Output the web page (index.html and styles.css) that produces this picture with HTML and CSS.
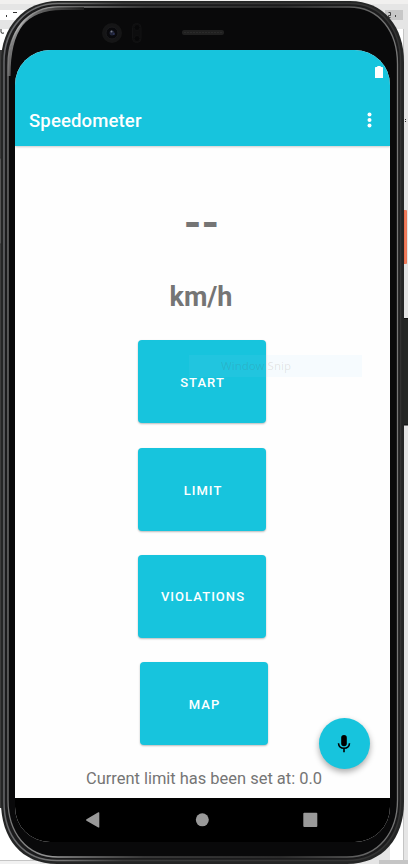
FILE: index.html
```html
<!DOCTYPE html>
<html lang="en">
<head>
<meta charset="utf-8">
<title>Speedometer</title>
<link rel="stylesheet" href="styles.css">
</head>
<body>
<div class="stage">
  <svg class="frame" width="408" height="864" viewBox="0 0 408 864" aria-hidden="true">
    <defs>
      <linearGradient id="edge" x1="0" y1="0" x2="1" y2="0">
        <stop offset="0" stop-color="#66676a"/><stop offset=".15" stop-color="#757575"/><stop offset=".3" stop-color="#3a3a3a"/><stop offset="1" stop-color="#333"/>
      </linearGradient>
      <linearGradient id="shine" x1="0" y1="0" x2="1" y2="0">
        <stop offset="0" stop-color="#777"/><stop offset=".12" stop-color="#999"/><stop offset=".35" stop-color="#444"/><stop offset=".7" stop-color="#333"/><stop offset="1" stop-color="#777"/>
      </linearGradient>
      <linearGradient id="gloss" x1="0" y1="1" x2="1" y2="0">
        <stop offset="0" stop-color="#777"/><stop offset=".45" stop-color="#c4c4c4"/><stop offset="1" stop-color="#222"/>
      </linearGradient>
      <linearGradient id="orange"><stop offset="0" stop-color="#d95b40"/><stop offset=".6" stop-color="#f5805f"/><stop offset="1" stop-color="#e3765a"/></linearGradient>
    </defs>
    <rect width="408" height="864" fill="#e5e5e5"/>
    <rect width="408" height="4" fill="#f1f0ef"/>
    <path d="M0 10h30v10H0zM0 29h12v21H0z" fill="#fff"/>
    <path d="M6 15h1v2H6zM13 12h4v1h-4z" fill="#333"/>
    <path d="M1 29v3q0 2 3 1" fill="none" stroke="#333"/>
    <rect x="385" y="10" width="18" height="10" fill="#c7c7c7"/>
    <path d="M388.500 12.500h2v3h-2v2h2M395.500 15v2" fill="none" stroke="#444"/>
    <path d="M390 29h13v25h-13zM390 815h13v45h-13z" fill="#fff"/>
    <path d="M403.500 29v831" stroke="#c5c5c5"/>
    <path d="M405 119h1v1h-1zM405 121h1v1h-1z" fill="#333"/>
    <rect x="379" y="860" width="29" height="4" fill="#c5c5c5"/>
    <path d="M0 808h30v52H0z" fill="#fff"/>
    <path d="M0 860h40v4H0z" fill="#f1f1f1"/><path d="M0 860.500h40" stroke="#c5c5c5"/>
    <path d="M0 50h3v758H0z" fill="#3c3c3c"/>
    <rect x="-2" y="158" width="4" height="86" rx="1" fill="#555" stroke="#333"/>
    <rect x="403" y="210" width="4" height="54" rx="1" fill="url(#orange)"/>
    <rect x="403" y="318.500" width="6" height="106.500" rx="1" fill="#252726" stroke="#111"/>
    <path d="M58 1H350C384 1 404 27 404 62V802C404 838 383 864 347 864H57C21 864 1 838 1 802V62C1 27 24 1 58 1Z" fill="#242525"/>
    <path d="M58 3.500H350C382 3.500 400.500 29 400.500 62V802C400.500 836 381 860.500 347 860.500H57C23 860.500 4 836 4 802V62C4 29 26 3.500 58 3.500Z" fill="#1b1b1c" stroke="url(#edge)" stroke-width="1.500"/>
    <path d="M58 7H349C380 7 397.500 32 397.500 64V800C397.500 832 379 857 347 857H58C26 857 8 832 8 800V64C8 32 28 7 58 7Z" fill="#09090a" stroke="url(#shine)" stroke-width="1.300"/>
    <path d="M9 76C9 28 25 9 62 8.500H84" fill="none" stroke="url(#gloss)" stroke-width="3" opacity=".75"/>
    <circle cx="112" cy="33" r="10" fill="#151516"/>
    <circle cx="112" cy="33" r="6" fill="#09090c" stroke="#1b1b1e"/>
    <circle cx="112" cy="33" r="2.500" fill="#202438"/><circle cx="111.500" cy="31.500" r="1" fill="#777b88"/><circle cx="114" cy="34" r=".7" fill="#424b83"/>
    <rect x="132.500" y="23.500" width="8.500" height="19" rx="4" fill="#0d0d0e" stroke="#121213"/>
    <circle cx="137" cy="27.500" r="3" fill="#070708" stroke="#111112"/><circle cx="137" cy="38.500" r="3" fill="#070708" stroke="#111112"/>
    <rect x="182" y="30" width="42" height="5" rx="2" fill="#202020"/><path d="M184 32.500h38" stroke="#2a2a2a" stroke-dasharray="2 1"/>
  </svg>

  <main class="screen">
    <header class="top">
      <div class="status">
        <svg width="8" height="12" viewBox="0 0 8 12"><path d="M2.300 0h3.400v1h1.500q.8 0 .8.800V12H0V1.800Q0 1 .8 1h1.500z" fill="#fff"/></svg>
      </div>
      <div class="bar">
        <h1 class="title">Speedometer</h1>
        <svg width="5" height="16" viewBox="0 0 5 16" fill="#fff"><circle cx="2.500" cy="2.400" r="2"/><circle cx="2.500" cy="8" r="2"/><circle cx="2.500" cy="13.500" r="2"/></svg>
      </div>
    </header>
    <section class="content">
      <div class="speed">--</div>
      <div class="unit">km/h</div>
      <div class="buttons">
        <button class="btn">START</button>
        <button class="btn limit">LIMIT</button>
        <button class="btn violations">VIOLATIONS</button>
        <button class="btn map">MAP</button>
      </div>
      <p class="note">Current limit has been set at: 0.0</p>
      <div class="snip">Window Snip</div>
      <button class="fab" aria-label="Voice">
        <svg width="14" height="20" viewBox="0 0 14 20"><rect x="4.200" y="1" width="5.600" height="11.300" rx="2.800"/><path d="M1.500 9.200C1.800 12.800 4 14.300 7 14.300s5.200-1.500 5.500-5.100M7 14.300v4" fill="none" stroke="#000" stroke-width="1.600"/></svg>
      </button>
    </section>
    <nav class="nav">
      <svg width="375" height="44" viewBox="0 0 375 44" fill="#999"><path d="M71.500 21.300 83.300 14.300q1-.5 1 .6v14q0 1-1 .5L71.500 22.700q-1-.7 0-1.400z"/><circle cx="187.300" cy="21.800" r="6.500"/><rect x="288.300" y="14.800" width="14" height="14.200" rx="1"/></svg>
    </nav>
  </main>
</div>
</body>
</html>
```
FILE: styles.css
```css
* { box-sizing: border-box; }
body { margin: 0; overflow: hidden; font-family: Roboto, "Liberation Sans", sans-serif; }
.stage { position: relative; width: 408px; height: 864px; padding: 50px 18px 22px 15px; }
.frame { position: absolute; left: 0; top: 0; }
.screen { position: relative; width: 375px; height: 792px; display: flex; flex-direction: column; overflow: hidden; border-radius: 35px; background: #fefefe; }
.top { height: 95.500px; background: #17c4dd; box-shadow: 0 1px 2px #0003; z-index: 1; }
.status { height: 45px; padding: 16px 7px 0 0; display: flex; justify-content: flex-end; }
.bar { height: 50px; padding: 0 18px 0 14px; display: flex; align-items: center; justify-content: space-between; }
.title { margin: 2px 0 0; color: #fff; font-size: 18.500px; line-height: 24px; font-weight: 500; letter-spacing: .15px; }
.content { position: relative; height: 652.500px; display: flex; flex-direction: column; align-items: center; color: #757575; }
.speed { margin-top: 47.500px; height: 60px; font-size: 45px; line-height: 60px; font-weight: 700; padding-right: 2px; }
.unit { margin-top: 26px; height: 36px; font-size: 27px; line-height: 36px; font-weight: 700; padding-right: 3px; }
.buttons { margin-top: 25px; margin-right: 1px; display: flex; flex-direction: column; }
.btn { width: 128px; height: 83px; padding: 2px 0 0 1px; border: 0; border-radius: 4px; background: #17c4dd; color: #fff; font: 500 13px/18px Roboto, sans-serif; letter-spacing: 1.050px; box-shadow: 0 1px 2px #0004; }
.limit { margin-top: 25px; padding-left: 2px; }
.violations { margin-top: 23.500px; padding: 1px 0 0 2px; }
.map { margin: 24.500px -2px 0 2px; }
.note { margin: 22px 0 0; padding-left: 3px; font-size: 16.450px; line-height: 24px; white-space: nowrap; }
.snip { position: absolute; left: 174px; top: 209.500px; width: 173px; height: 22px; padding-left: 32px; background: rgba(150, 215, 250, .08); color: rgba(90, 65, 50, .13); font: 11.500px/22px "Noto Sans", sans-serif; }
.fab { position: absolute; left: 303.500px; top: 572.500px; width: 51px; height: 51px; padding: 0; border: 0; border-radius: 50%; display: flex; align-items: center; justify-content: center; background: #17c4dd; box-shadow: 0 3px 6px #0005; }
.nav { height: 44px; background: #000; }
.nav svg { display: block; }
```
